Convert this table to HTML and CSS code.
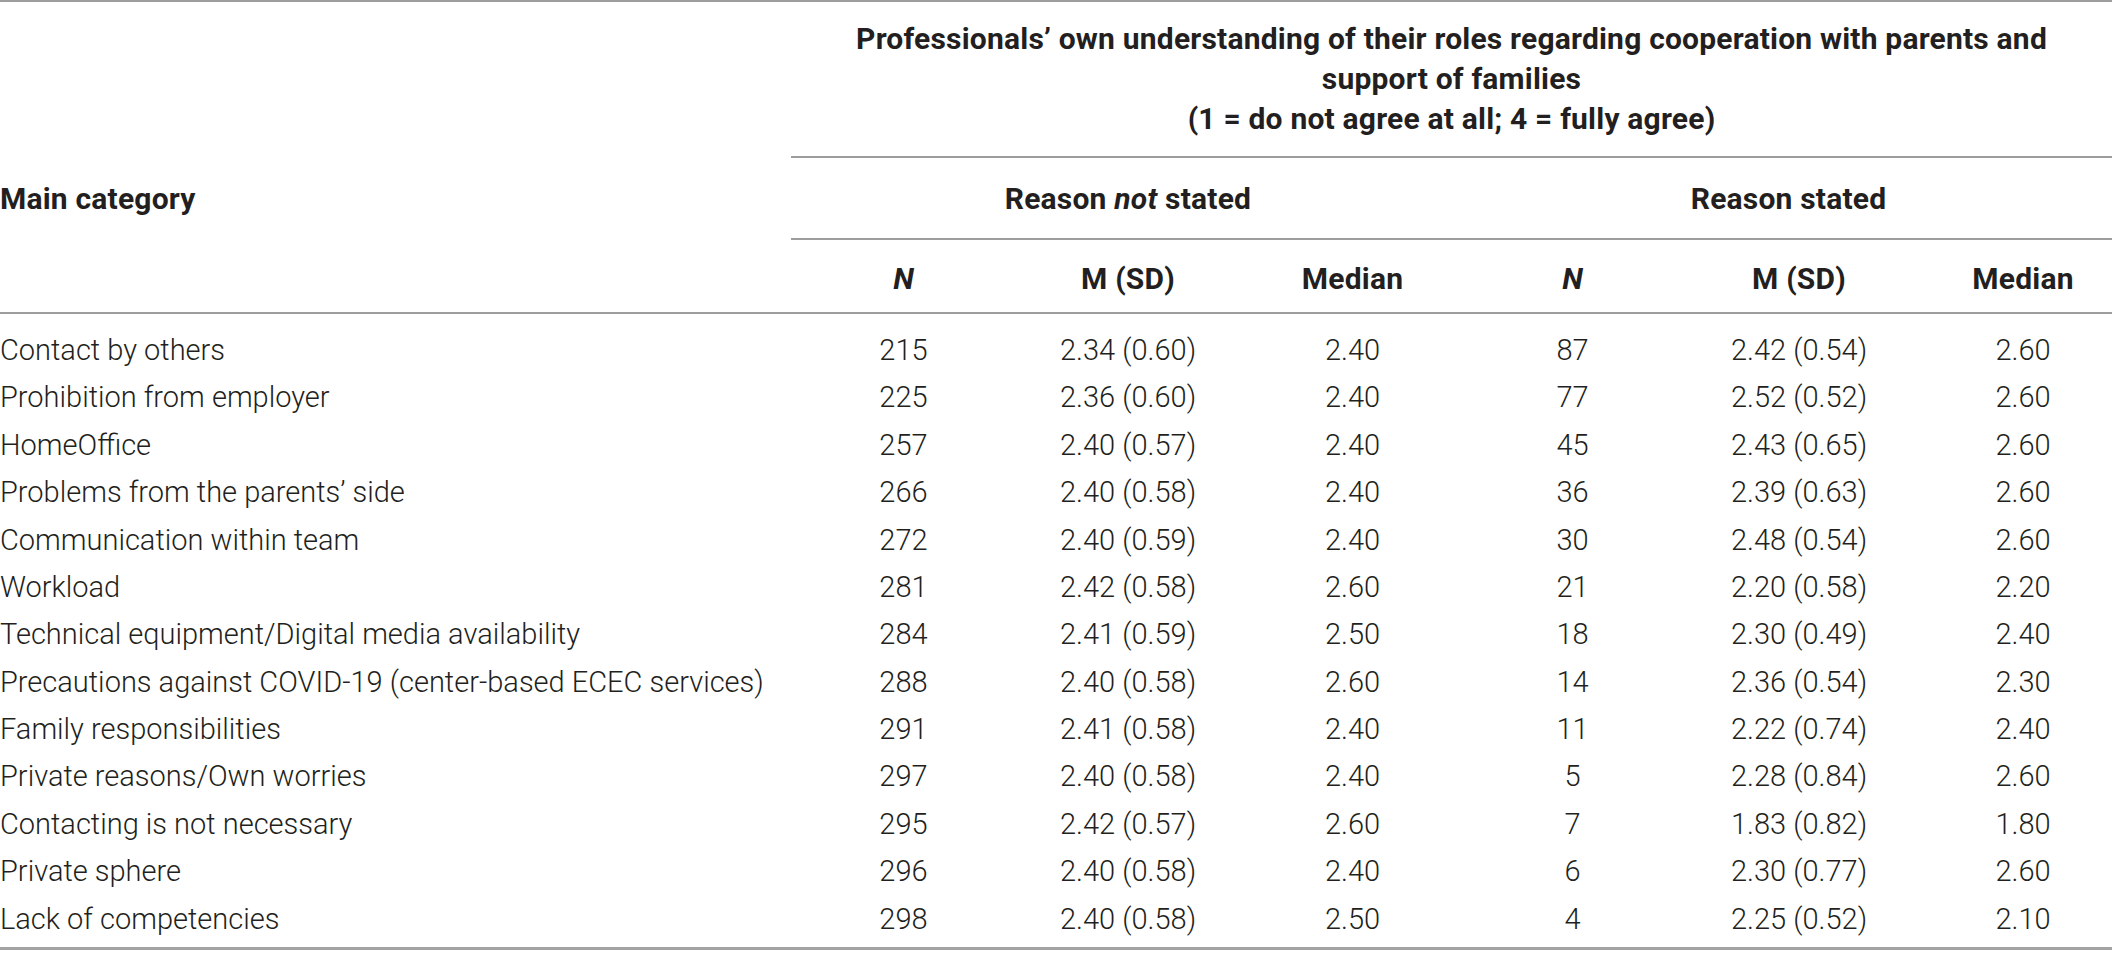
FILE: index.html
```html
<!DOCTYPE html>
<html lang="en">

<head>
    <meta charset="UTF-8">
    <meta name="viewport" content="width=device-width, initial-scale=1.0">
    <title>Table</title>
    <link rel="stylesheet" href="styles.css">
</head>

<body>
    <table class="stats">
        <colgroup>
            <col class="col_cat">
            <col class="col_n">
            <col class="col_m">
            <col class="col_med">
            <col class="col_n2">
            <col class="col_m2">
            <col class="col_med2">
        </colgroup>
        <thead>
            <tr class="head_top">
                <th class="cat_blank"></th>
                <th colspan="6" class="group_title">Professionals’ own understanding of their roles regarding cooperation with parents and<br>support of families<br>(1 = do not agree at all; 4 = fully agree)</th>
            </tr>
            <tr class="head_mid">
                <th class="cat_title">Main category</th>
                <th colspan="3" class="sub_title">Reason <i>not</i> stated</th>
                <th colspan="3" class="sub_title">Reason stated</th>
            </tr>
            <tr class="head_low">
                <th class="cat_blank"></th>
                <th><i>N</i></th>
                <th>M (SD)</th>
                <th>Median</th>
                <th><i>N</i></th>
                <th>M (SD)</th>
                <th>Median</th>
            </tr>
        </thead>
        <tbody>
            <tr><td>Contact by others</td><td>215</td><td>2.34 (0.60)</td><td>2.40</td><td>87</td><td>2.42 (0.54)</td><td>2.60</td></tr>
            <tr><td>Prohibition from employer</td><td>225</td><td>2.36 (0.60)</td><td>2.40</td><td>77</td><td>2.52 (0.52)</td><td>2.60</td></tr>
            <tr><td>HomeOffice</td><td>257</td><td>2.40 (0.57)</td><td>2.40</td><td>45</td><td>2.43 (0.65)</td><td>2.60</td></tr>
            <tr><td>Problems from the parents’ side</td><td>266</td><td>2.40 (0.58)</td><td>2.40</td><td>36</td><td>2.39 (0.63)</td><td>2.60</td></tr>
            <tr><td>Communication within team</td><td>272</td><td>2.40 (0.59)</td><td>2.40</td><td>30</td><td>2.48 (0.54)</td><td>2.60</td></tr>
            <tr><td>Workload</td><td>281</td><td>2.42 (0.58)</td><td>2.60</td><td>21</td><td>2.20 (0.58)</td><td>2.20</td></tr>
            <tr><td>Technical equipment/Digital media availability</td><td>284</td><td>2.41 (0.59)</td><td>2.50</td><td>18</td><td>2.30 (0.49)</td><td>2.40</td></tr>
            <tr><td>Precautions against COVID-19 (center-based ECEC services)</td><td>288</td><td>2.40 (0.58)</td><td>2.60</td><td>14</td><td>2.36 (0.54)</td><td>2.30</td></tr>
            <tr><td>Family responsibilities</td><td>291</td><td>2.41 (0.58)</td><td>2.40</td><td>11</td><td>2.22 (0.74)</td><td>2.40</td></tr>
            <tr><td>Private reasons/Own worries</td><td>297</td><td>2.40 (0.58)</td><td>2.40</td><td>5</td><td>2.28 (0.84)</td><td>2.60</td></tr>
            <tr><td>Contacting is not necessary</td><td>295</td><td>2.42 (0.57)</td><td>2.60</td><td>7</td><td>1.83 (0.82)</td><td>1.80</td></tr>
            <tr><td>Private sphere</td><td>296</td><td>2.40 (0.58)</td><td>2.40</td><td>6</td><td>2.30 (0.77)</td><td>2.60</td></tr>
            <tr><td>Lack of competencies</td><td>298</td><td>2.40 (0.58)</td><td>2.50</td><td>4</td><td>2.25 (0.52)</td><td>2.10</td></tr>
        </tbody>
    </table>
</body>

</html>
```

FILE: styles.css
```css
body {
    margin: 0;
    background-color: #ffffff;
    color: #231f20;
    font-family: Roboto, "Liberation Sans", sans-serif;
}

.stats {
    width: 2112px;
    border-collapse: collapse;
    table-layout: fixed;
    border-top: 2px solid #9d9d9d;
    border-bottom: 3px solid #a3a3a3;
}

.col_cat { width: 791px; }
.col_n { width: 225px; }
.col_m { width: 224px; }
.col_med { width: 225px; }
.col_n2 { width: 215px; }
.col_m2 { width: 238px; }
.col_med2 { width: 194px; }

th {
    font-size: 30px;
    font-weight: 700;
    letter-spacing: 0.2px;
    text-align: center;
    padding: 0;
}

.head_top th {
    height: 154px;
    line-height: 40px;
}

.group_title {
    border-bottom: 2px solid #9d9d9d;
}

.head_mid th {
    height: 80px;
}

.sub_title {
    border-bottom: 2px solid #9d9d9d;
}

.cat_title {
    text-align: left;
}

.head_low th {
    height: 61px;
    padding-top: 8px;
    padding-bottom: 3px;
    border-bottom: 2px solid #9d9d9d;
}

.head_low th:last-child {
    padding-left: 16px;
}

td {
    font-size: 29px;
    font-weight: 300;
    text-align: center;
    height: 24px;
    line-height: 24px;
    padding: 11.7px 0 11.7px;
}

td:first-child {
    text-align: left;
}

td:last-child {
    padding-left: 16px;
}

tbody tr:first-child td {
    padding-top: 24px;
}

tbody tr:last-child td {
    padding-bottom: 16px;
}
```
